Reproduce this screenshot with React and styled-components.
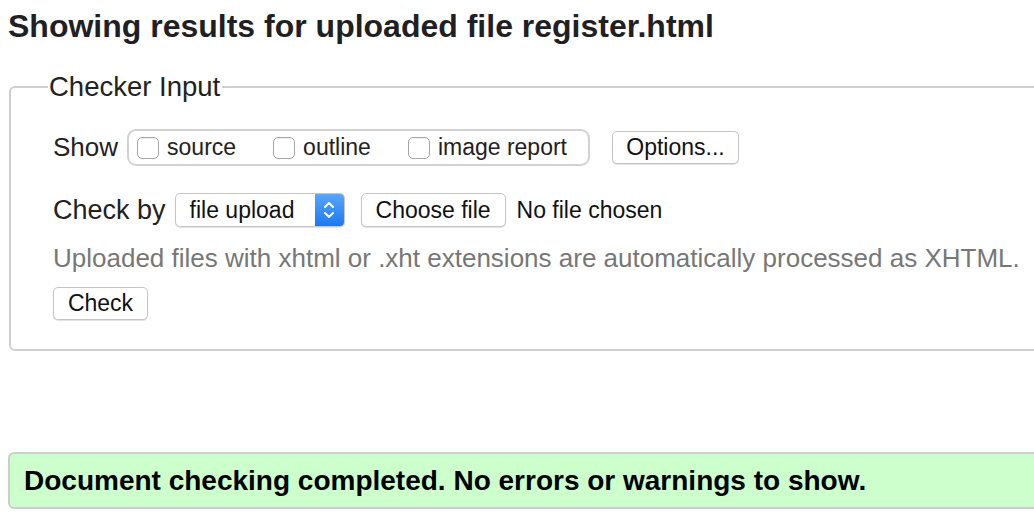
import React from 'react'
import styled, {createGlobalStyle} from 'styled-components'

const Global = createGlobalStyle`
  html, body {
    margin: 0;
    background: #fff;
    overflow: hidden;
  }
  body {
    font-family: "Liberation Sans", Arial, Helvetica, sans-serif;
    color: #222;
  }
`

const Page = styled.div`
  width: 1100px;
  padding: 8px;
`

const Title = styled.h1`
  margin: 0;
  font-size: 32px;
  line-height: 36px;
  font-weight: bold;
  color: #1f1f24;
`

const Fieldset = styled.fieldset`
  margin: 28px 0 0 1px;
  padding: 0 40px 29px 42px;
  border: 2px solid #cfcfcf;
  border-radius: 6px;
  min-inline-size: 0;
`

const Legend = styled.legend`
  margin-left: -5px;
  padding: 0 2px 0 1px;
  font-size: 27.5px;
  line-height: 30px;
  color: #222;
`

const Row = styled.div`
  display: flex;
  align-items: center;
  gap: 9px;
  margin-top: ${p => p.top || 0}px;
  color: #222;
`

const Label = styled.span`
  font-size: ${p => p.size || 26}px;
`

const Group = styled.div`
  display: flex;
  align-items: center;
  box-sizing: border-box;
  height: 37px;
  padding: 0 21px 0 8px;
  border: 2px solid #d2d2d2;
  border-radius: 9px;
  margin-right: 13px;
  font-size: 23px;
`

const Opt = styled.label`
  display: flex;
  align-items: center;
  gap: 8px;
  margin-right: ${p => p.last ? 0 : 37}px;
`

const Box = styled.span`
  display: inline-block;
  box-sizing: border-box;
  width: 22px;
  height: 22px;
  border: 1px solid #a6a6a6;
  border-radius: 5px;
  background: #fff;
  box-shadow: inset 0 1px 1px rgba(0,0,0,0.06);
`

const Button = styled.button`
  font-family: inherit;
  font-size: 23px;
  color: #111;
  box-sizing: border-box;
  width: ${p => p.w}px;
  height: ${p => p.h || 33}px;
  padding: 0;
  background: #fff;
  border: 1px solid #c6c6c6;
  border-radius: 5px;
  box-shadow: 0 1px 1px rgba(0,0,0,0.12);
  margin-right: ${p => p.mr || 0}px;
`

const Select = styled.div`
  display: flex;
  align-items: stretch;
  width: 170px;
  height: 34px;
  border: 1px solid #c6c6c6;
  border-radius: 5px;
  box-shadow: 0 1px 1px rgba(0,0,0,0.12);
  overflow: hidden;
  box-sizing: border-box;
  margin-right: 7px;
`

const SelectText = styled.span`
  flex: 1;
  display: flex;
  align-items: center;
  padding-left: 14px;
  font-size: 23px;
  color: #111;
`

const Arrows = styled.span`
  width: 29px;
  display: flex;
  align-items: center;
  justify-content: center;
  background: linear-gradient(#5aa6fb, #1d78f0);
`

const NoFile = styled.span`
  font-size: 23px;
  color: #111;
`

const Help = styled.p`
  margin: 16px 0 0;
  font-size: 26px;
  line-height: 30px;
  color: #777;
  white-space: nowrap;
`

const Notice = styled.div`
  margin-top: 101px;
  box-sizing: border-box;
  height: 57px;
  display: flex;
  align-items: center;
  padding-left: 14px;
  border: 2px solid #cdcdcd;
  border-radius: 6px;
  background: #ccffcc;
  font-size: 28px;
  font-weight: bold;
  color: #000;
`

export default function App() {
  return (
    <>
      <Global/>
      <Page>
        <Title>Showing results for uploaded file register.html</Title>
        <Fieldset>
          <Legend>Checker Input</Legend>
          <Row top={27}>
            <Label>Show</Label>
            <Group>
              <Opt><Box/>source</Opt>
              <Opt><Box/>outline</Opt>
              <Opt last><Box/>image report</Opt>
            </Group>
            <Button w={127}>Options...</Button>
          </Row>
          <Row top={27}>
            <Label size={27}>Check by</Label>
            <Select>
              <SelectText>file upload</SelectText>
              <Arrows>
                <svg width="12" height="20" viewBox="0 0 12 20" fill="none" stroke="#fff" strokeWidth="2" strokeLinecap="round" strokeLinejoin="round">
                  <path d="M2 7l4-4 4 4"/>
                  <path d="M2 13l4 4 4-4"/>
                </svg>
              </Arrows>
            </Select>
            <Button w={145} h={34} mr={2}>Choose file</Button>
            <NoFile>No file chosen</NoFile>
          </Row>
          <Help>Uploaded files with xhtml or .xht extensions are automatically processed as XHTML.</Help>
          <Row top={14}>
            <Button w={95}>Check</Button>
          </Row>
        </Fieldset>
        <Notice>Document checking completed. No errors or warnings to show.</Notice>
      </Page>
    </>
  )
}
